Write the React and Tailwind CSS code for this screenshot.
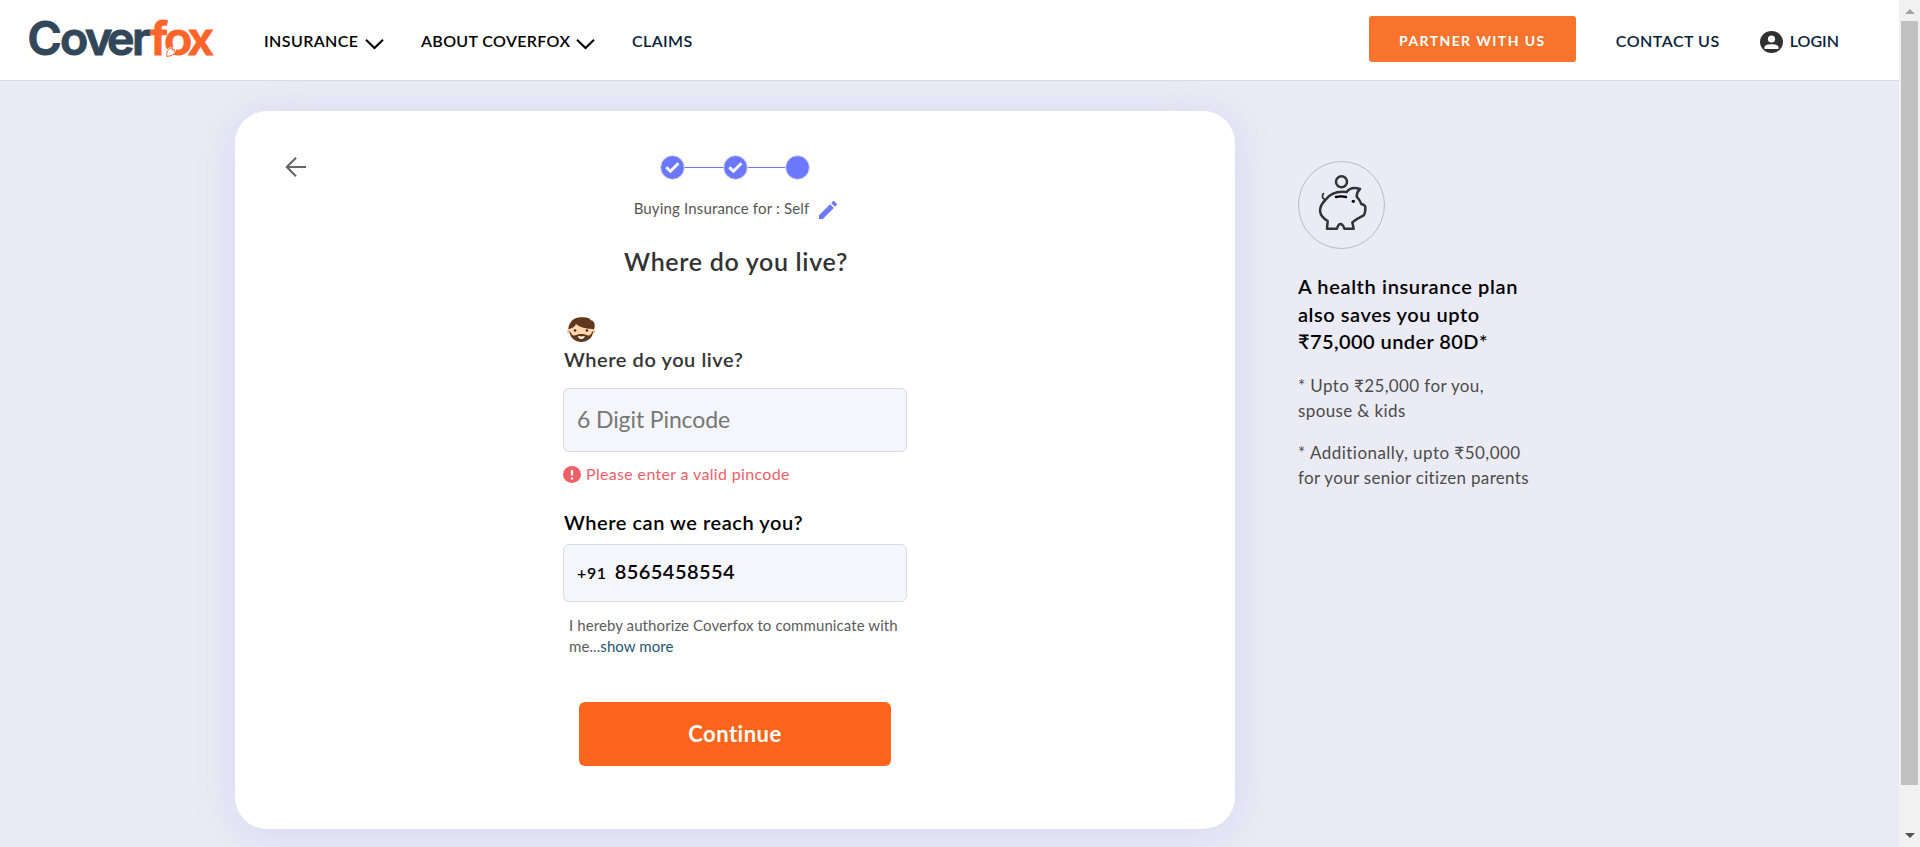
import React from "react";
import { MdEdit } from "react-icons/md";

function Logo() {
  return (
    <svg width="200" height="64" viewBox="0 -10 200 64" className="block">
      <g fontFamily="Inter, sans-serif" fontWeight="600" fontSize="46.500" strokeWidth="1.100">
        <text x="-1.5 31 56 78 103" y="38.500" fill="#33475b" stroke="#33475b">Cover</text>
        <text x="121 135 158.5" y="38.500" fill="#ff6429" stroke="#ff6429">fox</text>
      </g>
      <path d="M137 41 C135.500 35 138 30.500 146 30.500 C149 34 146.500 39 137 41Z" fill="#fff" />
      <path d="M138 40.500 C137 36 139 32.500 143.500 31.500 L143 34 L145.500 33.500 L145 35.500 L147 36 C145 38.500 142 40 138 40.500Z" fill="#fff" stroke="#ff6429" strokeWidth="1" />
    </svg>
  );
}

function Chevron() {
  return (
    <svg width="19" height="11" viewBox="0 0 19 11" fill="none" stroke="#000" strokeWidth="2" className="mt-[10px]">
      <path d="M1 0.800 L9.500 9 L18 0.800" />
    </svg>
  );
}

function UserIcon() {
  return (
    <svg width="23" height="22" viewBox="0 0 23 22">
      <ellipse cx="11.500" cy="11" rx="11.500" ry="11" fill="#303030" />
      <circle cx="11.500" cy="8" r="3.600" fill="#fff" />
      <path d="M4.500 18 V16 C5 14 8 13.300 11.500 13.300 S18 14 18.500 16 V18Z" fill="#fff" />
    </svg>
  );
}

function Step({ done }) {
  return (
    <svg width="25" height="25" viewBox="0 0 25 25" className="block shrink-0">
      <circle cx="12.500" cy="12.500" r="11.800" fill="#6b78ff" stroke="#cfcfe0" strokeWidth="0.900" />
      {done && <path d="M6.300 12.200 L10.400 16.300 L18.500 8.200" fill="none" stroke="#fff" strokeWidth="2.900" />}
    </svg>
  );
}

function Face() {
  return (
    <svg width="28" height="25" viewBox="81 50 84 76" className="ml-1 block">
      <circle cx="87" cy="94" r="6.500" fill="#f8bd99" />
      <circle cx="160" cy="94" r="6.500" fill="#f8bd99" />
      <ellipse cx="124" cy="88" rx="35" ry="36" fill="#ffd7ae" />
      <path d="M88 92 C94 98 94 105 100 106 C110 107 112 100 124 102 C136 100 138 107 148 106 C154 105 154 98 160 92 C160 114 142 126 124 126 C106 126 88 114 88 92Z" fill="#5f371c" />
      <path d="M113 108 Q124 111 135 108 Q132 117 124 117 Q116 117 113 108Z" fill="#fff" />
      <path d="M84 87 C88 62 102 50 126 51 C140 50 150 54 153 60 C164 61 167 74 163 87 C146 86 122 84 108 71 C104 80 96 85 84 87Z" fill="#5f371c" />
      <circle cx="105" cy="91" r="4" fill="#4a2a18" />
      <circle cx="141" cy="91" r="4" fill="#4a2a18" />
    </svg>
  );
}

function Piggy() {
  return (
    <svg width="87" height="88" viewBox="174 63 261 264" fill="none" className="block" strokeLinejoin="round" strokeLinecap="round">
      <ellipse cx="304.500" cy="195" rx="129" ry="130.500" stroke="#b9b9c3" strokeWidth="3" />
      <g stroke="#333" strokeWidth="7.500">
        <circle cx="304.500" cy="125" r="16.500" />
        <path d="M250 161 C245 168 247 176 254 178" strokeWidth="5.500" />
        <path d="M256 180 C270 160 294 153 320 156 C328 145 342 141 360 147 C352 154 350 162 350 170 C357 177 361 184 364 192 C372 194 377 197 376 204 C376 214 376 222 370 227 C360 232 348 237 337 247 L341 266 H313 C311 259 308 252 301 252 C295 252 293 259 291 266 H261 L263 243 C236 227 232 204 256 180Z" />
      </g>
      <path d="M288 171 Q303 167 318 171" stroke="#000" strokeWidth="7" />
      <circle cx="340" cy="184" r="5" fill="#000" />
    </svg>
  );
}

function Header() {
  return (
    <header className="flex h-[81px] items-start border-b border-[#d9d9e8] bg-white text-base leading-6 font-semibold text-black">
      <div className="ml-[29px] w-[235px] pt-[6px]"><Logo /></div>
      <nav className="flex pt-[29px]">
        <div className="flex w-[157px] gap-[6px]"><span className="tracking-[0.42px]">INSURANCE</span><Chevron /></div>
        <div className="flex w-[211px] gap-[6px]"><span className="tracking-[0.35px]">ABOUT COVERFOX</span><Chevron /></div>
        <span className="tracking-[0.4px] text-[#06213b]">CLAIMS</span>
      </nav>
      <div className="ml-auto flex pr-[60px] text-[#06213b]">
        <button className="mt-4 h-[46px] w-[207px] rounded-[3px] bg-[#f8742c] pt-[3px] text-sm font-bold tracking-[1.4px] text-white">PARTNER WITH US</button>
        <span className="mt-[29px] ml-[40px] w-[144px] tracking-[0.5px]">CONTACT US</span>
        <span className="mt-[31px] mr-[7px]"><UserIcon /></span>
        <span className="mt-[29px] tracking-[0px]">LOGIN</span>
      </div>
    </header>
  );
}

function FormCard() {
  return (
    <section className="relative ml-[235px] mt-[30px] flex h-[718px] w-[1000px] shrink-0 flex-col items-center rounded-[32px] bg-white pt-11 shadow-[0_5px_44px_rgba(95,110,225,0.16)]">
      <button className="absolute top-[46px] left-[50px]">
        <svg width="22" height="20" viewBox="0 0 22 20" fill="none" stroke="#666" strokeWidth="2.100" className="block">
          <path d="M21 10 H2 M11 0.800 L1.800 10 L11 19.200" />
        </svg>
      </button>
      <div className="flex items-center">
        <Step done />
        <span className="h-px w-[38px] bg-[#6b78ff]" />
        <Step done />
        <span className="h-px w-[37px] bg-[#6b78ff]" />
        <Step />
      </div>
      <div className="mt-[18px] flex h-5 items-center pl-[4px] text-[15px] tracking-[0.16px] text-[#555]">
        <span>Buying Insurance for : Self</span>
        <MdEdit size={24} color="#6b78ff" className="mt-[3px] ml-[7px]" />
      </div>
      <h1 className="mt-[28px] pl-[2px] text-[25px] leading-[30px] font-semibold tracking-[0.68px] text-[#333]">Where do you live?</h1>
      <div className="mt-[41px] w-[344px]">
        <Face />
        <h2 className="mt-[5px] pl-px text-xl leading-6 font-semibold tracking-[0.56px] text-[#333]">Where do you live?</h2>
        <div className="mt-[17px] flex h-16 items-center rounded-md border border-[#dcdce0] bg-[#f5f6fc] pb-[2px] pl-[13px] text-[23px] tracking-[-0.1px] text-[#777]">6 Digit Pincode</div>
        <div className="mt-3 flex h-5 items-center gap-[5px] text-base tracking-[0.34px] text-[#ee5f68]">
          <svg width="18" height="17" viewBox="0 0 18 17">
            <ellipse cx="9" cy="8.500" rx="9" ry="8.500" fill="#ee5f68" />
            <path d="M9 4 V9.500 M9 11.500 V13.500" stroke="#fff" strokeWidth="2.200" />
          </svg>
          <span>Please enter a valid pincode</span>
        </div>
        <h2 className="mt-[26px] pl-px text-xl leading-6 font-semibold tracking-[0.54px] text-black">Where can we reach you?</h2>
        <div className="mt-[10px] flex h-[58px] items-baseline rounded-md border border-[#dcdce0] bg-[#f5f6fc] pt-[14px] pl-[13px] font-semibold text-black">
          <span className="mr-[8px] text-base tracking-[0.6px]">+91</span>
          <span className="text-xl leading-6 tracking-[0.45px]">8565458554</span>
        </div>
        <p className="mt-[13px] pl-[6px] text-[15px] leading-[21px] tracking-[0.09px] text-[#5c5c5c]">
          I hereby authorize Coverfox to communicate with<br />me...<a className="text-[#1f5673]">show more</a>
        </p>
        <button className="mx-auto mt-[45px] block h-16 w-[312px] rounded-md bg-[#fc651b] pb-[1px] text-[22px] font-bold tracking-[0.5px] text-white">Continue</button>
      </div>
    </section>
  );
}

function Benefits() {
  return (
    <aside className="mt-20 ml-[63px] w-[260px]">
      <Piggy />
      <h3 className="mt-6 text-xl leading-[27.5px] font-semibold text-black">
        <span className="tracking-[0.64px]">A health insurance plan</span><br />
        <span className="tracking-[0.55px]">also saves you upto</span><br />
        <span className="tracking-[0.42px]">₹75,000 under 80D*</span>
      </h3>
      <p className="mt-[17px] text-[17px] leading-[25.3px] tracking-[0.38px] text-[#4c4c4c]">* Upto ₹25,000 for you,<br />spouse &amp; kids</p>
      <p className="mt-[17px] text-[17px] leading-[25.3px] text-[#4c4c4c]">
        <span className="tracking-[0.47px]">* Additionally, upto ₹50,000</span><br />
        <span className="tracking-[0.32px]">for your senior citizen parents</span>
      </p>
    </aside>
  );
}

function Scrollbar() {
  return (
    <div className="flex h-full w-[21px] shrink-0 flex-col items-center bg-[#f1f1f1]">
      <svg width="10" height="5" viewBox="0 0 10 5" className="mt-[9px]"><path d="M0 5 L5 0 L10 5Z" fill="#a3a3a3" /></svg>
      <div className="mt-[7px] h-[764px] w-[17px] bg-[#c1c1c1]" />
      <svg width="10" height="5" viewBox="0 0 10 5" className="mt-[48px]"><path d="M0 0 L5 5 L10 0Z" fill="#505050" /></svg>
    </div>
  );
}

export default function App() {
  return (
    <div className="flex h-[847px] w-full overflow-hidden font-[Lato,sans-serif]">
      <div className="flex min-w-0 flex-1 flex-col bg-[#ebebf5]">
        <Header />
        <main className="flex min-h-0 flex-1 items-start overflow-hidden">
          <FormCard />
          <Benefits />
        </main>
      </div>
      <Scrollbar />
    </div>
  );
}
